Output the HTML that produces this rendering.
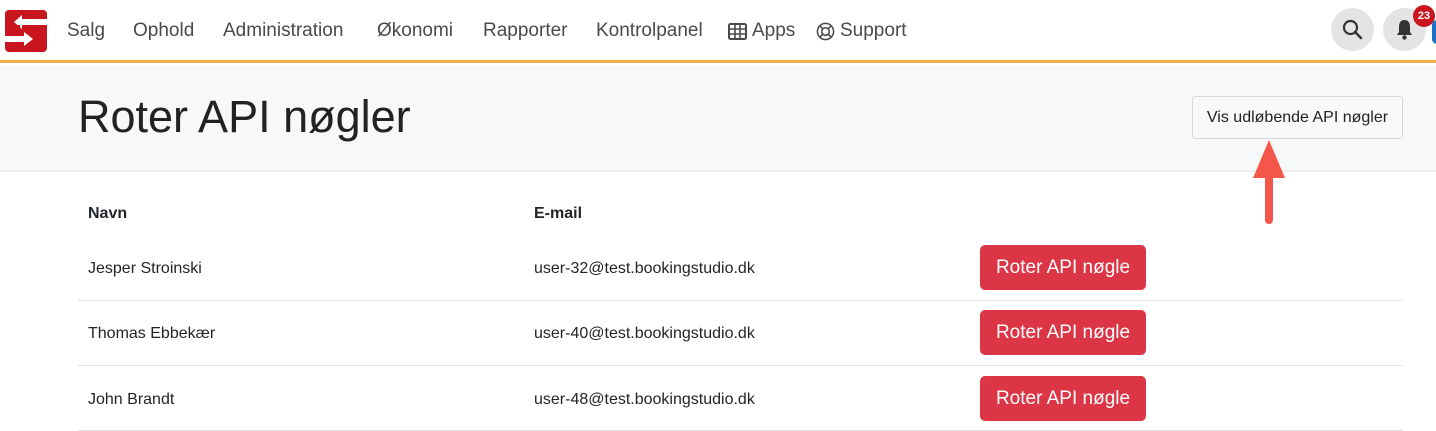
<!DOCTYPE html>
<html><head><meta charset="utf-8"><style>
*{box-sizing:border-box;margin:0;padding:0}
body{width:1436px;height:431px;overflow:hidden;background:#fff;font-family:"Liberation Sans",Arial,sans-serif;color:#212529;position:relative}
.nav{position:absolute;left:0;top:0;width:1436px;height:63px;background:#fff;border-bottom:3px solid #f0ad4e}
.nav a{position:absolute;top:20px;font-size:19px;color:#4a4a4a;text-decoration:none;white-space:nowrap}
.hdr{position:absolute;left:0;top:66px;width:1436px;height:106px;background:#f7f8fa;border-bottom:2px solid #eceef1}
h1{position:absolute;left:78px;top:91px;font-size:45px;font-weight:400;color:#222}
.vbtn{position:absolute;left:1192px;top:96px;width:211px;height:43px;border:1px solid #d6d8db;border-radius:3px;background:#f8f9fa;font-size:16px;line-height:42px;text-align:center;color:#222}
.th{position:absolute;top:205px;font-size:16px;font-weight:700}
.td{position:absolute;font-size:16px}
.line{position:absolute;left:78px;width:1325px;height:1px;background:#dee2e6}
.rb{position:absolute;left:980px;width:166px;height:45px;background:#dc3545;border-radius:5px;color:#fff;font-size:19px;line-height:46px;text-align:center}
.circ{position:absolute;top:8px;width:43px;height:43px;border-radius:50%;background:#e4e4e4}
</style></head><body>
<div class="nav">
<svg style="position:absolute;left:5px;top:10px" width="42" height="42" viewBox="0 0 42 42"><rect width="42" height="42" rx="4" fill="#c8151e"/><path d="M9 12 L17 5 L17 9 L42 9 L42 15 L17 15 L17 19 Z" fill="#fff"/><path d="M0 26 L19 26 L19 22 L28 29 L19 36 L19 32 L0 32 Z" fill="#fff"/><rect x="9" y="15" width="6" height="11" fill="#c8151e"/></svg>
<a style="left:67px">Salg</a><a style="left:133px">Ophold</a><a style="left:223px">Administration</a><a style="left:377px">Økonomi</a><a style="left:483px">Rapporter</a><a style="left:596px">Kontrolpanel</a>
<svg style="position:absolute;left:728px;top:23px" width="19" height="17" viewBox="0 0 19 17"><rect x="1" y="1" width="17" height="15" rx="1.5" fill="none" stroke="#4a4a4a" stroke-width="2"/><path d="M1 6H18M1 11H18M7 1V16M12 1V16" stroke="#4a4a4a" stroke-width="1.6"/></svg>
<a style="left:752px">Apps</a>
<svg style="position:absolute;left:816px;top:22px" width="19" height="19" viewBox="0 0 20 20"><circle cx="10" cy="10" r="8.5" fill="none" stroke="#4a4a4a" stroke-width="1.6"/><circle cx="10" cy="10" r="4" fill="none" stroke="#4a4a4a" stroke-width="1.6"/><path d="M4 4L7 7M16 4L13 7M4 16L7 13M16 16L13 13" stroke="#4a4a4a" stroke-width="1.6"/></svg>
<a style="left:840px">Support</a>
<div class="circ" style="left:1331px"></div>
<svg style="position:absolute;left:1342px;top:19px" width="21" height="21" viewBox="0 0 21 21"><circle cx="8.5" cy="8.5" r="6.5" fill="none" stroke="#333" stroke-width="2.2"/><path d="M13 13L19 19" stroke="#333" stroke-width="2.5" stroke-linecap="round"/></svg>
<div class="circ" style="left:1383px"></div>
<svg style="position:absolute;left:1395px;top:19px" width="19" height="22" viewBox="0 0 19 22"><path d="M9.5 1C5.5 1 4 4 4 8V13L2 16H17L15 13V8C15 4 13.5 1 9.5 1Z" fill="#333"/><circle cx="9.5" cy="18.5" r="2.2" fill="#333"/></svg>
<div style="position:absolute;left:1413px;top:5px;width:22px;height:22px;border-radius:50%;background:#c8151e;color:#fff;font-size:11px;line-height:22px;text-align:center;font-weight:700">23</div>
<div style="position:absolute;left:1432px;top:20px;width:10px;height:24px;border-radius:5px;background:#1a73c8"></div>
</div>
<div class="hdr"></div>
<h1>Roter API nøgler</h1>
<div class="vbtn">Vis udløbende API nøgler</div>
<svg style="position:absolute;left:1250px;top:138px" width="38" height="88" viewBox="0 0 38 88"><path d="M19 2L35 40H3Z" fill="#f5564a"/><path d="M19 30V82" stroke="#f5564a" stroke-width="8" stroke-linecap="round"/></svg>
<div class="th" style="left:88px">Navn</div><div class="th" style="left:534px">E-mail</div>
<div class="td" style="left:88px;top:260px">Jesper Stroinski</div><div class="td" style="left:534px;top:260px">user-32@test.bookingstudio.dk</div><div class="rb" style="top:245px">Roter API nøgle</div>
<div class="line" style="top:300px"></div>
<div class="td" style="left:88px;top:325px">Thomas Ebbekær</div><div class="td" style="left:534px;top:325px">user-40@test.bookingstudio.dk</div><div class="rb" style="top:310px">Roter API nøgle</div>
<div class="line" style="top:365px"></div>
<div class="td" style="left:88px;top:391px">John Brandt</div><div class="td" style="left:534px;top:391px">user-48@test.bookingstudio.dk</div><div class="rb" style="top:376px">Roter API nøgle</div>
<div class="line" style="top:430px"></div>
</body></html>
